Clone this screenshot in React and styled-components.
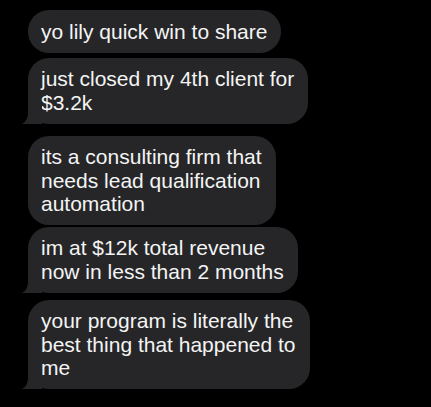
import React from 'react'
import styled, { createGlobalStyle } from 'styled-components'

const GlobalStyle = createGlobalStyle`
    html, body {
        margin: 0;
        padding: 0;
        background: #000;
    }
    body {
        font-family: "Liberation Sans", Arial, sans-serif;
        -webkit-font-smoothing: antialiased;
    }
`

const Thread = styled.div`
    display: flex;
    flex-direction: column;
    align-items: flex-start;
    padding: 10px 0 0 28px;
    min-height: 407px;
    box-sizing: border-box;
    background: #000;
`

const Bubble = styled.div`
    position: relative;
    margin-top: ${props => props.gap || 0}px;
    padding: 9.5px 14px 9.5px 13px;
    background: #262628;
    color: #f4f4f4;
    font-size: 21px;
    line-height: 23.5px;
    border-radius: 21px;
    white-space: nowrap;
`

const Tail = styled.svg`
    position: absolute;
    left: -6px;
    bottom: 0;
    width: 20px;
    height: 20px;
`

const Line = styled.div``

const messages = [
    { lines: ['yo lily quick win to share'], gap: 0 },
    { lines: ['just closed my 4th client for', '$3.2k'], gap: 5, tail: true },
    { lines: ['its a consulting firm that', 'needs lead qualification', 'automation'], gap: 12 },
    { lines: ['im at $12k total revenue', 'now in less than 2 months'], gap: 1.5, tail: true },
    { lines: ['your program is literally the', 'best thing that happened to', 'me'], gap: 7, tail: true },
]

function Message({ lines, gap, tail }) {
    return (
        <Bubble gap={gap}>
            {tail && (
                <Tail viewBox="0 0 20 20">
                    <path d="M6 0 L6 9 C6 14 4 17.5 0 20 L20 20 L20 0 Z" fill="#262628" />
                </Tail>
            )}
            {lines.map((l, i) => <Line key={i}>{l}</Line>)}
        </Bubble>
    )
}

export default function App() {
    return (
        <>
            <GlobalStyle />
            <Thread>
                {messages.map((m, i) => <Message key={i} {...m} />)}
            </Thread>
        </>
    )
}
